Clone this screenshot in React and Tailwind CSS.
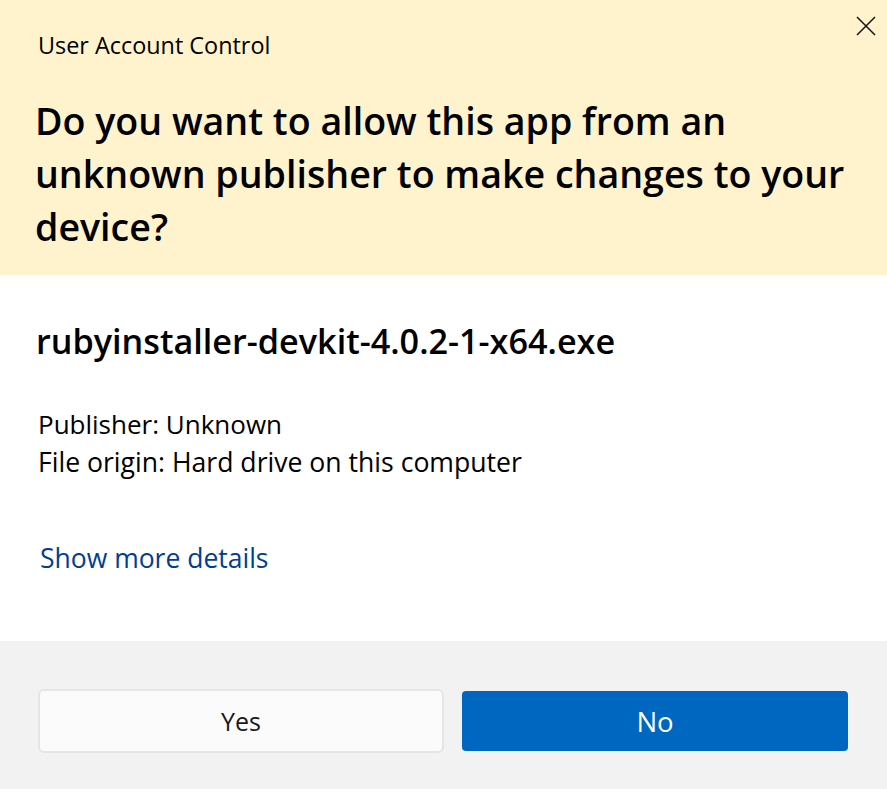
import React from 'react'

const App = () => {
  return (
    <div className="relative w-[887px] h-[789px] flex flex-col bg-white text-black font-['Open_Sans','Noto_Sans',sans-serif] overflow-hidden">
      <div className="h-[275px] bg-[#fff3ce] pl-[38px] pr-[30px] pt-[30px]">
        <div className="text-[23.4px] leading-[30px]">User Account Control</div>
        <h1 className="mt-[34px] -ml-[3px] text-[37.6px] leading-[53px] font-semibold">
          Do you want to allow this app from an unknown publisher to make changes to your device?
        </h1>
      </div>
      <button className="absolute top-[16px] right-[11px] w-[20px] h-[20px]" aria-label="Close">
        <svg viewBox="0 0 20 20" className="w-[20px] h-[20px]" fill="none" stroke="#111" strokeWidth="1.5">
          <path d="M1 1 L19 19 M19 1 L1 19" />
        </svg>
      </button>
      <div className="flex-1 flex flex-col pl-[38px]">
        <div className="mt-[42px] -ml-[2px] text-[34.2px] leading-[48px] font-semibold">rubyinstaller-devkit-4.0.2-1-x64.exe</div>
        <div className="mt-[40px] leading-[38px]">
          <div className="text-[26px]">Publisher: Unknown</div>
          <div className="text-[26.6px]">File origin: Hard drive on this computer</div>
        </div>
        <a className="mt-[58px] ml-[2px] text-[26.5px] leading-[38px] text-[#003e92]">Show more details</a>
      </div>
      <div className="h-[148px] bg-[#f2f2f2] flex items-start gap-[18px] pl-[38px] pt-[48px]">
        <button className="w-[406px] h-[64px] pt-[2px] bg-[#fbfbfb] border-2 border-[#e5e5e5] rounded-[6px] text-[25px] text-[#1a1a1a]">Yes</button>
        <button className="mt-[2px] w-[386px] h-[60px] pt-[2px] bg-[#0067c0] rounded-[4px] text-[27.5px] text-white">No</button>
      </div>
    </div>
  )
}

export default App
